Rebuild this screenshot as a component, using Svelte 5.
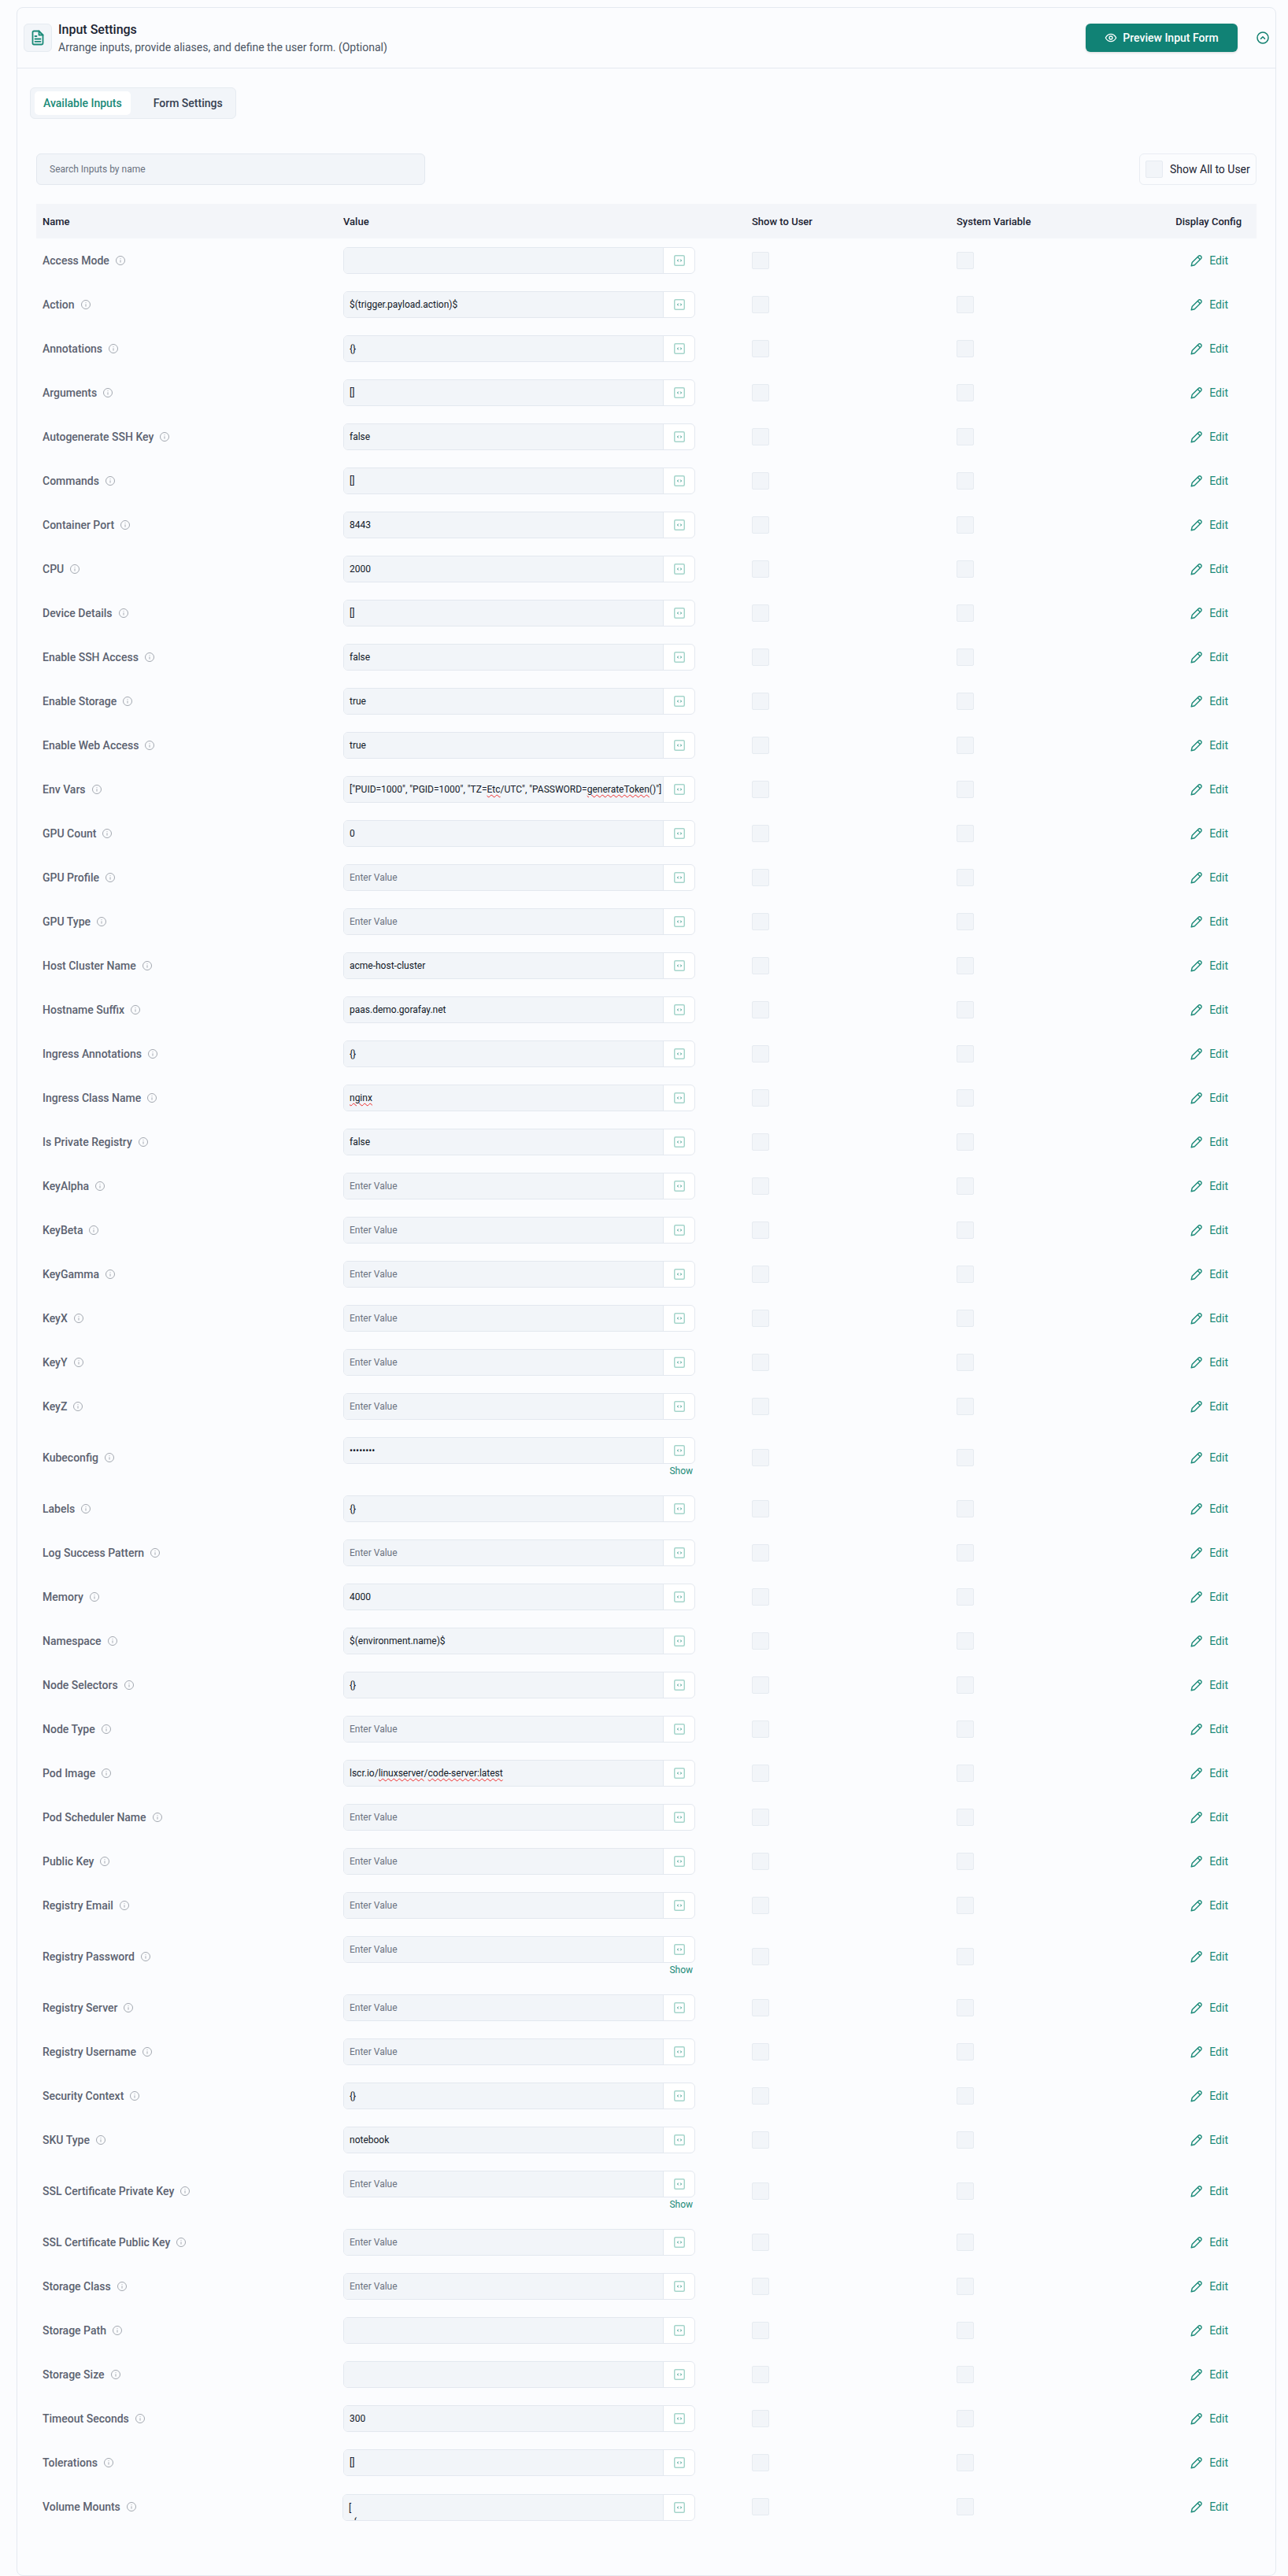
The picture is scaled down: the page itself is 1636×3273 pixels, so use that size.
<script lang="ts">
    type Row = { name: string; value?: string; ph?: boolean; secret?: boolean; multi?: boolean };

    const rows: Row[] = [
        { name: "Access Mode" },
        { name: "Action", value: "$(trigger.payload.action)$" },
        { name: "Annotations", value: "{}" },
        { name: "Arguments", value: "[]" },
        { name: "Autogenerate SSH Key", value: "false" },
        { name: "Commands", value: "[]" },
        { name: "Container Port", value: "8443" },
        { name: "CPU", value: "2000" },
        { name: "Device Details", value: "[]" },
        { name: "Enable SSH Access", value: "false" },
        { name: "Enable Storage", value: "true" },
        { name: "Enable Web Access", value: "true" },
        { name: "Env Vars", value: '["PUID=1000", "PGID=1000", "TZ=~Etc~/UTC", "PASSWORD=~generateToken~()"]' },
        { name: "GPU Count", value: "0" },
        { name: "GPU Profile", ph: true },
        { name: "GPU Type", ph: true },
        { name: "Host Cluster Name", value: "acme-host-cluster" },
        { name: "Hostname Suffix", value: "paas.demo.gorafay.net" },
        { name: "Ingress Annotations", value: "{}" },
        { name: "Ingress Class Name", value: "~nginx~" },
        { name: "Is Private Registry", value: "false" },
        { name: "KeyAlpha", ph: true },
        { name: "KeyBeta", ph: true },
        { name: "KeyGamma", ph: true },
        { name: "KeyX", ph: true },
        { name: "KeyY", ph: true },
        { name: "KeyZ", ph: true },
        { name: "Kubeconfig", value: "••••••••", secret: true },
        { name: "Labels", value: "{}" },
        { name: "Log Success Pattern", ph: true },
        { name: "Memory", value: "4000" },
        { name: "Namespace", value: "$(environment.name)$" },
        { name: "Node Selectors", value: "{}" },
        { name: "Node Type", ph: true },
        { name: "Pod Image", value: "lscr.io/~linuxserver~/~code-server:latest~" },
        { name: "Pod Scheduler Name", ph: true },
        { name: "Public Key", ph: true },
        { name: "Registry Email", ph: true },
        { name: "Registry Password", ph: true, secret: true },
        { name: "Registry Server", ph: true },
        { name: "Registry Username", ph: true },
        { name: "Security Context", value: "{}" },
        { name: "SKU Type", value: "notebook" },
        { name: "SSL Certificate Private Key", ph: true, secret: true },
        { name: "SSL Certificate Public Key", ph: true },
        { name: "Storage Class", ph: true },
        { name: "Storage Path" },
        { name: "Storage Size" },
        { name: "Timeout Seconds", value: "300" },
        { name: "Tolerations", value: "[]" },
        { name: "Volume Mounts", value: "[\n  {", multi: true },
    ];
</script>

<div class="card">
    <header class="card-head">
        <div class="head-icon">
            <svg width="16" height="20" viewBox="0 0 16 20" fill="none" stroke="#1a8a78" stroke-width="1.8" stroke-linejoin="round" stroke-linecap="round">
                <path d="M1.500 3a1.500 1.500 0 0 1 1.500-1.500h6.500L14.500 6.500V17a1.500 1.500 0 0 1-1.500 1.500H3A1.500 1.500 0 0 1 1.500 17z" />
                <path d="M9.500 1.500v5h5" />
                <path d="M4.500 8h2M4.500 11.500h7M4.500 14.800h7" />
            </svg>
        </div>
        <div class="head-text">
            <h2>Input Settings</h2>
            <p>Arrange inputs, provide aliases, and define the user form. (Optional)</p>
        </div>
        <button class="preview">
            <svg width="16" height="16" viewBox="0 0 24 24" fill="none" stroke="currentColor" stroke-width="2">
                <path d="M2 12s3.600-7 10-7 10 7 10 7-3.600 7-10 7-10-7-10-7z" />
                <circle cx="12" cy="12" r="3" />
            </svg>
            Preview Input Form
        </button>
        <svg class="collapse" width="16" height="16" viewBox="0 0 16 16" fill="none" stroke="#11806f" stroke-width="1.500">
            <circle cx="8" cy="8" r="7" />
            <path d="M5.500 9.300 8 6.800l2.500 2.500" stroke-linecap="round" stroke-linejoin="round" />
        </svg>
    </header>

    <div class="tabs">
        <span class="tab active">Available Inputs</span>
        <span class="tab">Form Settings</span>
    </div>

    <div class="tools">
        <div class="search">Search Inputs by name</div>
        <div class="show-all">
            <span class="check"></span>
            <span>Show All to User</span>
        </div>
    </div>

    <div class="table">
        <div class="row head">
            <div>Name</div>
            <div>Value</div>
            <div>Show to User</div>
            <div>System Variable</div>
            <div class="right">Display Config</div>
        </div>
        {#each rows as row}
            <div class="row">
                <div class="name">
                    {row.name}
                    <svg class="info" width="12" height="12" viewBox="0 0 12 12" fill="none" stroke="#a3a8b0">
                        <circle cx="6" cy="6" r="5.500" />
                        <path d="M6 5.400v3.200M6 3.200v.9" />
                    </svg>
                </div>
                <div class="value">
                    <div class="field" class:multi={row.multi}>
                        <div class="field-text" class:ph={row.ph}>
                            {#if row.ph}
                                Enter Value
                            {:else if row.value}
                                {#each row.value.split("~") as part, i}
                                    <span class:bad={i % 2 === 1}>{part}</span>
                                {/each}
                            {/if}
                        </div>
                        <div class="addon">
                            <svg width="14" height="14" viewBox="0 0 14 14" fill="none">
                                <rect x="0.750" y="0.750" width="12.500" height="12.500" rx="1.500" stroke="#a5d5cb" stroke-width="1.500" />
                                <path d="M5.700 5.600 4.500 7l1.200 1.400M8.300 5.600 9.500 7 8.300 8.400" stroke="#2a9484" stroke-width="1" />
                            </svg>
                        </div>
                    </div>
                    {#if row.secret}
                        <span class="show">Show</span>
                    {/if}
                </div>
                <div><span class="check"></span></div>
                <div><span class="check"></span></div>
                <div class="edit-cell">
                    <span class="edit">
                        <svg width="16" height="16" viewBox="0 0 16 16" fill="none" stroke="currentColor" stroke-width="1.400" stroke-linejoin="round">
                            <path d="M1.200 14.800l1-4.200 8.300-8.300a1.800 1.800 0 0 1 2.600 0l.5.500a1.800 1.800 0 0 1 0 2.600l-8.300 8.300z" />
                            <path d="M9.300 3.500l3.200 3.200" />
                        </svg>
                        Edit
                    </span>
                </div>
            </div>
        {/each}
    </div>
</div>

<style>
    :global(body) {
        background: #fbfcfe;
    }

    .card {
        box-sizing: border-box;
        margin: 9px 15px 0 21px;
        border: 1px solid #e4e9f0;
        border-radius: 8px;
        font-family: Roboto, sans-serif;
        color: #1b2333;
    }

    .card-head {
        display: flex;
        align-items: center;
        height: 77px;
        box-sizing: border-box;
        padding: 0 8px;
        border-bottom: 1px solid #e4e9f0;
    }

    .head-icon {
        width: 36px;
        height: 36px;
        box-sizing: border-box;
        display: flex;
        align-items: center;
        justify-content: center;
        background: #f2f5f9;
        border: 1px solid #e6ebf1;
        border-radius: 6px;
    }

    .head-text {
        flex: 1;
        margin-left: 8px;
    }

    h2 {
        margin: 0 0 3px;
        font-size: 16px;
        line-height: 20px;
        font-weight: 500;
    }

    p {
        margin: 0;
        font-size: 14px;
        line-height: 18px;
        color: #4b5563;
    }

    .preview {
        display: flex;
        align-items: center;
        justify-content: center;
        gap: 7px;
        width: 193px;
        height: 36px;
        border: none;
        border-radius: 6px;
        background: #118275;
        color: #fff;
        font: 500 14px Roboto, sans-serif;
        box-shadow: 0 1px 3px rgba(0, 0, 0, 0.15);
    }

    .collapse {
        margin-left: 24px;
    }

    .tabs {
        display: flex;
        width: fit-content;
        box-sizing: border-box;
        height: 40px;
        margin: 24px 0 0 16px;
        padding: 4px 5px;
        background: #f2f5f9;
        border: 1px solid #e6ebf1;
        border-radius: 6px;
        font-size: 14px;
        font-weight: 500;
    }

    .tab {
        padding: 0 11px;
        margin-right: 18px;
        line-height: 30px;
        border-radius: 5px;
        color: #374151;
    }

    .tab:last-child {
        margin-right: 0;
    }

    .tab.active {
        background: #fff;
        color: #1a8a78;
    }

    .tools {
        display: flex;
        justify-content: space-between;
        margin: 44px 24px 0;
    }

    .search {
        box-sizing: border-box;
        width: 494px;
        height: 40px;
        padding-left: 16px;
        line-height: 38px;
        background: #f2f5f9;
        border: 1px solid #e3e8ef;
        border-radius: 6px;
        font-size: 12px;
        color: #6b7280;
    }

    .show-all {
        box-sizing: border-box;
        display: flex;
        align-items: center;
        gap: 9px;
        width: 149px;
        height: 40px;
        padding-left: 7px;
        border: 1px solid #e9edf3;
        border-radius: 6px;
        font-size: 14px;
    }

    .check {
        display: block;
        box-sizing: border-box;
        width: 22px;
        height: 22px;
        background: #f2f5f9;
        border: 1px solid #e6ebf1;
        border-radius: 2px;
    }

    .table {
        margin: 24px 24px 59px;
    }

    .row {
        display: grid;
        grid-template-columns: 390px 519px 260px 240px 141px;
        align-items: center;
    }

    .row.head {
        min-height: 44px;
        background: #f3f5f9;
        font-size: 13px;
        font-weight: 500;
    }

    .row.head > :first-child {
        padding-left: 8px;
    }

    .right {
        padding-right: 19px;
        text-align: right;
    }

    .name {
        display: flex;
        align-items: center;
        gap: 8px;
        padding-left: 8px;
        font-size: 14px;
        font-weight: 500;
        color: #5b6270;
    }

    .value {
        display: flex;
        flex-direction: column;
        width: 447px;
        padding: 11px 0;
    }

    .field {
        display: flex;
        box-sizing: border-box;
        height: 34px;
        background: #fff;
        border: 1px solid #e3e8ef;
        border-radius: 6px;
        overflow: hidden;
    }

    .field.multi {
        margin: 1px 0 -1px -1px;
    }

    .field-text {
        box-sizing: border-box;
        flex: 1;
        min-width: 0;
        padding-left: 7px;
        background: #f2f5f9;
        border-right: 1px solid #e3e8ef;
        font-size: 12px;
        font-weight: 400;
        line-height: 32px;
        color: #111827;
        white-space: pre;
        overflow: hidden;
    }

    .field-text.ph {
        color: #6b7280;
    }

    .multi .field-text {
        line-height: 17px;
        padding-top: 9px;
    }

    .bad {
        text-decoration: underline wavy #ee2a2a 1px;
        text-underline-offset: 2px;
    }

    .addon {
        flex: none;
        width: 39px;
        display: flex;
        align-items: center;
        justify-content: center;
    }

    .show {
        align-self: flex-end;
        padding-right: 3px;
        font-size: 12px;
        line-height: 18px;
        color: #1a8a78;
    }

    .edit-cell {
        display: flex;
        justify-content: flex-end;
        padding-right: 36px;
    }

    .edit {
        display: flex;
        align-items: center;
        gap: 8px;
        font-size: 14px;
        color: #1a8a78;
    }
</style>
